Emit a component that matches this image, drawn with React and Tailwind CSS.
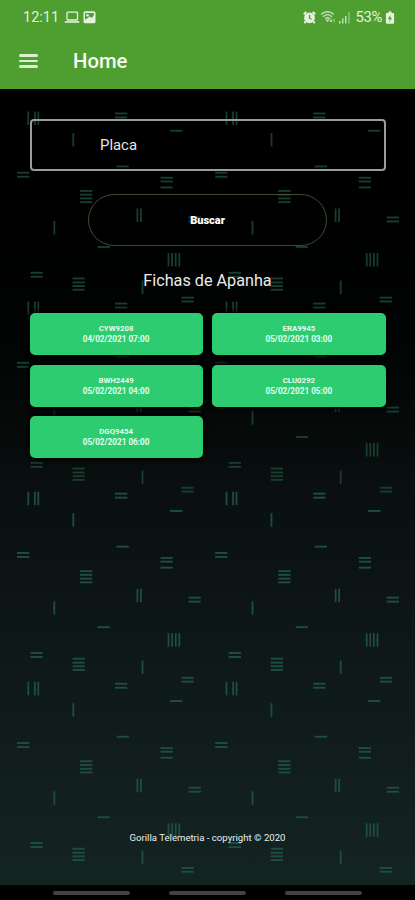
import React from 'react';

const FICHAS = [
  { placa: 'CYW9208', data: '04/02/2021 07:00' },
  { placa: 'ERA9945', data: '05/02/2021 03:00' },
  { placa: 'BWH2449', data: '05/02/2021 04:00' },
  { placa: 'CLU0292', data: '05/02/2021 05:00' },
  { placa: 'DGQ9454', data: '05/02/2021 06:00' },
];

// one tile of the backdrop: [x, y] of each dash
const H_DASHES = [
  [115, 1], [115, 5], [170, 18.3], [116.5, 54], [17, 60.3], [17, 64.3],
  [160.5, 65.3], [160.5, 69], [160.5, 75],
  [80, 78.5], [80, 82.2], [80, 86], [80, 89.7],
  [188.5, 105], [188.5, 109], [97.5, 134.5], [30.5, 160.3], [30.5, 164.3],
  [72.5, 166], [72.5, 170], [72.5, 173.6], [72.5, 177.3],
  [181.5, 185.2], [181.5, 189],
];

const V_DASHES = [
  [27.4, 0], [34, 0], [37.4, 0], [72.4, 21.5], [136.5, 97], [140, 97],
  [53.4, 109.5], [167.6, 141.5], [171.2, 141.5], [174.8, 141.5], [178.4, 141.5],
  [141.6, 169],
];

const TILES = [0, 1, 2, 3].flatMap(row => [0, 1].map(col => ({ row, col })));

function Backdrop() {
  return (
    <svg className="absolute inset-0 h-full w-full" viewBox="0 89 415 796" aria-hidden="true">
      {TILES.map(({ row, col }) => (
        <g
          key={`${row}-${col}`}
          transform={`translate(${col * 198.2} ${111.5 + row * 190.1})`}
          fill={row < 2 ? '#173d31' : '#1d4e3f'}
        >
          {H_DASHES.map(([x, y]) => <rect key={`h${x}-${y}`} x={x} y={y} width="12.3" height="1.9" />)}
          {V_DASHES.map(([x, y]) => <rect key={`v${x}-${y}`} x={x} y={y} width="1.8" height="13.5" />)}
        </g>
      ))}
    </svg>
  );
}

function StatusBar() {
  return (
    <div className="flex h-[33px] items-center pl-[23px] pr-[20.5px] pt-[1px] text-[#e4f1df]">
      <span className="w-[37px] whitespace-nowrap pt-[1.5px] text-[14.5px] leading-none">12:11</span>
      <svg className="ml-[4px] h-[13px] w-[16px]" viewBox="0 0 16 13" fill="none" stroke="currentColor" strokeWidth="1.3">
        <rect x="3" y="1.2" width="10.5" height="7.8" rx="0.8" />
        <path d="M0.8 11h14.5" strokeWidth="1.6" />
      </svg>
      <svg className="ml-[3px] h-[13px] w-[13px]" viewBox="0 0 13 13">
        <rect x="0.5" y="0.3" width="12" height="12" rx="1.6" fill="currentColor" />
        <path d="M2 2h8.8v2.6L8.5 7 6.8 5.6 2 8.8z" fill="#4f9e30" />
        <circle cx="4.5" cy="4.2" r="1.3" fill="currentColor" />
      </svg>

      <svg className="ml-auto h-[13px] w-[13px]" viewBox="0 0 13 13">
        <circle cx="6.5" cy="6.8" r="5.4" fill="currentColor" />
        <path d="M0.8 3.3 3.3 0.9M9.7 0.9l2.5 2.4M2.7 10.5l-1.4 1.6M10.3 10.5l1.4 1.6" stroke="currentColor" strokeWidth="2" />
        <path d="M6.5 3.8v3.3l2 1.2" fill="none" stroke="#4f9e30" strokeWidth="1.3" />
      </svg>
      <svg className="ml-[4px] h-[14px] w-[16px]" viewBox="0 0 16 14" fill="none" stroke="#c4e0b8" strokeWidth="1.4">
        <path d="M1.2 4.4c3.7-3.5 8.9-3.5 12.6 0M3.2 6.7c2.6-2.5 6-2.5 8.6 0M5.3 8.9c1.4-1.4 3-1.4 4.4 0" />
        <path d="M7.5 11.6 6 10h3zM11 7.8v4M9.7 10.4l1.3 1.5 1.3-1.5M14 12.3v-3.6" fill="#c4e0b8" strokeWidth="0.8" />
      </svg>
      <svg className="ml-[2px] h-[13px] w-[13px]" viewBox="0 0 13 13" fill="#c4e0b8">
        <path d="M1 10h1.5v2.5H1zM4 7.5h1.5v5H4zM7 5h1.5v7.5H7z" />
        <path d="M10.3 1h1.4v11.5h-1.4z" opacity="0.6" />
      </svg>
      <span className="ml-[4.5px] w-[27px] whitespace-nowrap pt-[1.5px] text-[14.8px] leading-none tracking-[-0.3px]">53%</span>
      <svg className="ml-[2px] h-[13px] w-[10px]" viewBox="0 0 10 13">
        <path d="M3.5 0.5h3V2h1.7c.5 0 .9.4.9.9v8.9c0 .5-.4.9-.9.9H1.8c-.5 0-.9-.4-.9-.9V2.9c0-.5.4-.9.9-.9h1.7z" fill="currentColor" />
        <path d="M5.4 4 2.9 8h1.8l-.3 3L7 6.8H5.2z" fill="#4f9e30" />
      </svg>
    </div>
  );
}

function Header() {
  return (
    <header className="h-[89px] shrink-0 bg-[#4f9e30]">
      <StatusBar />
      <div className="flex h-[56px] items-center pl-[18.5px]">
        <button className="flex w-[19.5px] flex-col gap-[3.3px]" aria-label="Menu">
          <span className="h-[2.4px] w-full rounded-sm bg-[#dcefd5]" />
          <span className="h-[2.4px] w-full rounded-sm bg-[#dcefd5]" />
          <span className="h-[2.4px] w-full rounded-sm bg-[#dcefd5]" />
        </button>
        <h1 className="ml-[35px] pt-[1px] text-[20.3px] font-medium leading-none text-[#f6fcf3]">Home</h1>
      </div>
    </header>
  );
}

function FichaCard({ placa, data }) {
  return (
    <button className="flex h-[42px] flex-col items-center justify-center rounded-[5px] bg-[#2ecc71] font-bold leading-[11px] text-[#e3fdec] shadow-[0_0_5px_2px_#000]">
      <span className="text-[7.8px]">{placa}</span>
      <span className="text-[8.2px]">{data}</span>
    </button>
  );
}

export default function App() {
  return (
    <div className="flex h-[900px] w-[415px] flex-col overflow-hidden bg-black font-['Roboto',sans-serif]">
      <Header />

      <main className="relative flex-1 bg-linear-to-b from-black via-[#09100f] to-[#142423]">
        <Backdrop />
        <div className="relative flex h-full flex-col items-center px-[29.5px] pt-[29.5px]">
          <div className="flex h-[52px] w-full items-center rounded-[4px] border-2 border-[#9b9b9b] pl-[68.5px] pt-[1.5px] text-[14.9px] text-[#e6e6e6]">
            Placa
          </div>

          <button className="mt-[23.5px] flex h-[52px] w-[239px] items-center justify-center rounded-full border-[1.5px] border-[#3c4d2f] pt-[3px] text-[11px] font-black text-white">
            Buscar
          </button>

          <h2 className="mt-[24px] text-[16.2px] leading-[22px] text-[#ececec]">Fichas de Apanha</h2>

          <div className="mt-[21px] grid w-full grid-cols-2 gap-x-[9.5px] gap-y-[9.6px]">
            {FICHAS.map(f => <FichaCard key={f.placa} {...f} />)}
          </div>

          <footer className="mb-[40px] mt-auto whitespace-nowrap text-[9.6px] leading-[14px] text-[#e8eeee]">
            Gorilla Telemetria - copyright © 2020
          </footer>
        </div>
      </main>

      {/* Android gesture bar */}
      <nav className="flex h-[15px] shrink-0 justify-center gap-[38.5px] bg-black pt-[6px]">
        <span className="h-[4px] w-[77.5px] rounded-full bg-[#434343]" />
        <span className="h-[4px] w-[77.5px] rounded-full bg-[#434343]" />
        <span className="h-[4px] w-[77.5px] rounded-full bg-[#434343]" />
      </nav>
    </div>
  );
}
